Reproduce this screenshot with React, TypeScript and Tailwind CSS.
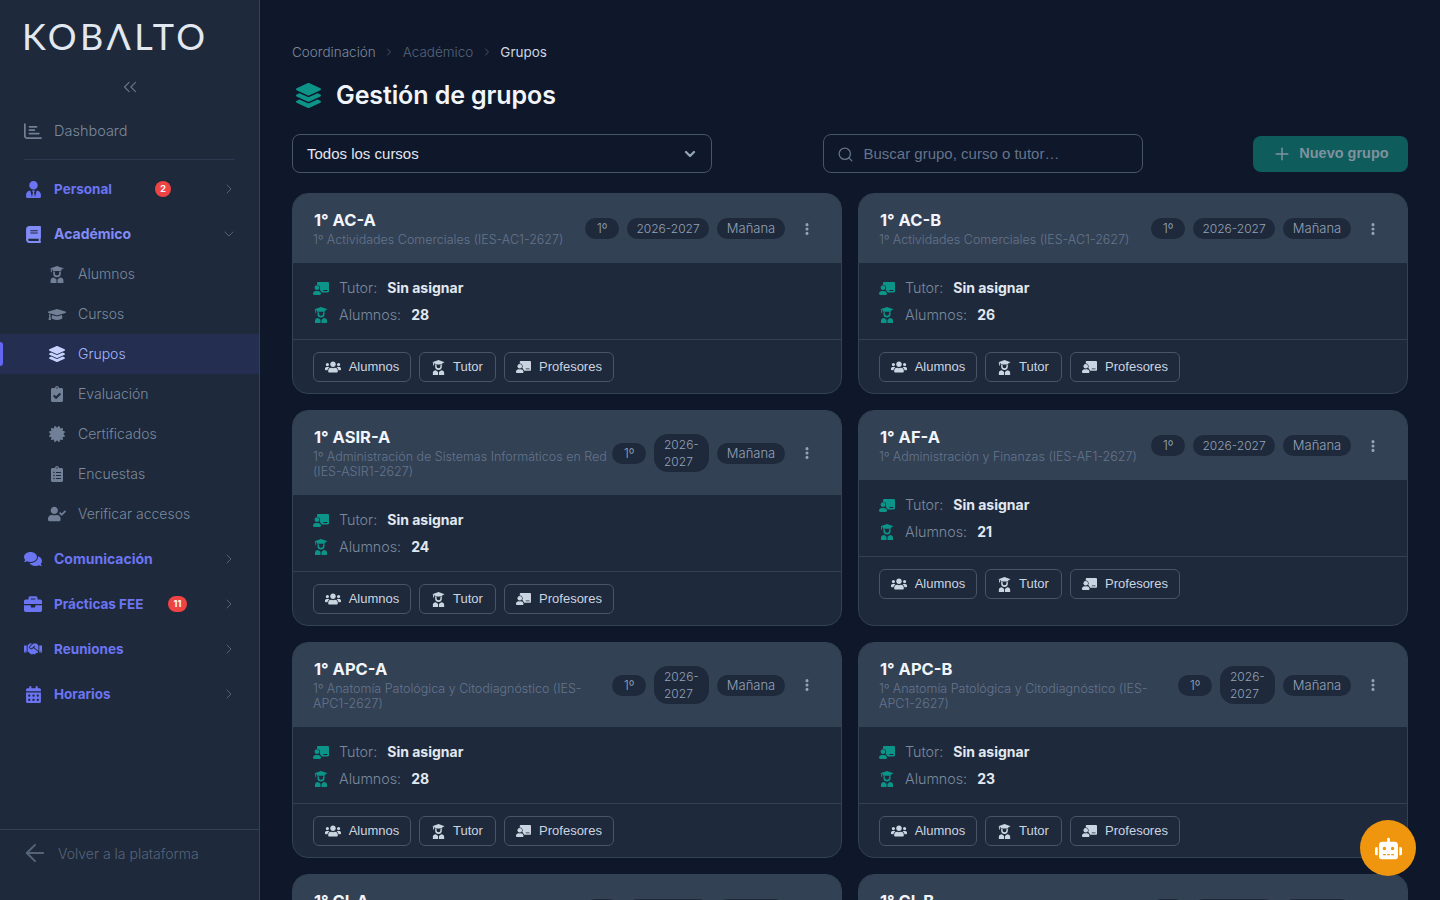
import React from 'react';
import { FaRegChartBar, FaCalendarDays, FaEllipsisVertical } from 'react-icons/fa6';
import {
  FaUserTie, FaBook, FaGraduationCap, FaLayerGroup, FaClipboardCheck, FaCertificate,
  FaClipboardList, FaUserCheck, FaComments, FaBriefcase, FaHandshake, FaUsers, FaRobot,
} from 'react-icons/fa';
import { ChevronsLeft, ChevronRight, ChevronDown, ArrowLeft, Search, Plus } from 'lucide-react';

// graduate with cap, the pack versions are too wide for what the design shows
const StudentIcon = ({ className }: { className?: string }) => (
  <svg viewBox="0 0 14 17" fill="currentColor" className={className}>
    <path d="M7 0L14 2.5L11.3 3.6V5H2.7V3.6L0 2.5Z" />
    <rect x="0.8" y="3" width="1" height="3.2" />
    <path d="M3.2 5.6V7.4a3.8 3.8 0 0 0 7.6 0V5.6H9.2V7.2a2.2 2.2 0 0 1-4.4 0V5.6Z" />
    <path d="M0.6 17V14.6C0.6 12.7 2 11.6 3.9 11.6L6.5 13.6V17Z" />
    <path d="M13.4 17V14.6C13.4 12.7 12 11.6 10.1 11.6L7.5 13.6V17Z" />
  </svg>
);

// teacher next to a filled board
const TeacherIcon = ({ className }: { className?: string }) => (
  <svg viewBox="0 0 640 512" fill="currentColor" className={className}>
    <circle cx="160" cy="224" r="96" />
    <path d="M208 352c-2.39 0-4.78.35-7.06 1.09C187.98 357.3 174.35 360 160 360c-14.35 0-27.98-2.7-40.95-6.91-2.28-.74-4.66-1.09-7.05-1.09C49.94 352-.33 402.48 0 464.62.14 490.88 21.73 512 48 512h224c26.27 0 47.86-21.12 48-47.38.33-62.14-49.94-112.62-112-112.62z" />
    <path fillRule="evenodd" d="M160 104V48C160 21 182 0 208 0H592C618 0 640 21 640 48V368C640 395 618 416 592 416H347C340 390 326 369 308 352L264 290A120 120 0 0 0 160 104ZM416 320V352H576V320Z" />
  </svg>
);

const subItems = [
  { name: 'Alumnos', icon: StudentIcon, size: 'w-[14px] h-[17px]' },
  { name: 'Cursos', icon: FaGraduationCap, size: 'text-[19px]' },
  { name: 'Grupos', icon: FaLayerGroup, size: 'text-[16px]', active: true },
  { name: 'Evaluación', icon: FaClipboardCheck, size: 'text-[16px]' },
  { name: 'Certificados', icon: FaCertificate, size: 'text-[16px]' },
  { name: 'Encuestas', icon: FaClipboardList, size: 'text-[16px]' },
  { name: 'Verificar accesos', icon: FaUserCheck, size: 'text-[18px]' },
];

const groups = [
  { title: '1° AC-A', sub: '1º Actividades Comerciales (IES-AC1-2627)', alumnos: 28 },
  { title: '1° AC-B', sub: '1º Actividades Comerciales (IES-AC1-2627)', alumnos: 26 },
  { title: '1° ASIR-A', sub: '1º Administración de Sistemas Informáticos en Red (IES-ASIR1-2627)', alumnos: 24, wrap: true },
  { title: '1° AF-A', sub: '1º Administración y Finanzas (IES-AF1-2627)', alumnos: 21 },
  { title: '1° APC-A', sub: '1º Anatomía Patológica y Citodiagnóstico (IES-APC1-2627)', alumnos: 28, wrap: true },
  { title: '1° APC-B', sub: '1º Anatomía Patológica y Citodiagnóstico (IES-APC1-2627)', alumnos: 23, wrap: true },
  { title: '1° CI-A', sub: '1º Cocina (IES-CI1-2627)', alumnos: 20 },
  { title: '1° CI-B', sub: '1º Cocina (IES-CI1-2627)', alumnos: 20 },
];

const NavGroup = ({ icon: Icon, label, badge, labelClass, iconSize, open, active }: any) => (
  <div className="flex items-center h-10 mt-[5px] pl-6 pr-[22px]">
    <span className="w-[18px] flex justify-center">
      <Icon className={`${iconSize ?? 'text-[17px]'} ${active ? 'text-[#818cf8]' : 'text-[#6b75f2]'}`} />
    </span>
    <span className={`ml-3 font-bold ${labelClass ?? 'text-[13.5px]'} ${active ? 'text-[#818cf8]' : 'text-[#6b75f2]'}`}>{label}</span>
    {badge && (
      <span className={`h-4 rounded-full bg-[#ef4444] text-white text-[9px] font-bold flex items-center justify-center ${badge.length > 1 ? 'w-[19px]' : 'w-4'}`}>
        {badge}
      </span>
    )}
    <span className="ml-auto text-[#56657c]">
      {open ? <ChevronDown className="w-4 h-4" strokeWidth={1.4} /> : <ChevronRight className="w-4 h-4" strokeWidth={1.4} />}
    </span>
  </div>
);

const Sidebar = () => (
  <aside className="w-[260px] h-screen shrink-0 bg-[#1e293b] border-r border-[#334155] flex flex-col">
    <div className="pl-[22px] pt-4 h-14 text-[36px] leading-10 font-['Lato',sans-serif] font-normal tracking-[3.4px] text-[#e2e8f0]">
      KOBΛLTO
    </div>
    <div className="mt-[19px] h-6 flex items-center justify-center text-[#64748b]">
      <ChevronsLeft className="w-[22px] h-[22px]" strokeWidth={1.3} />
    </div>
    <div className="mt-3 h-10 pl-6 flex items-center">
      <span className="w-[18px] flex justify-center text-[#718096]"><FaRegChartBar className="text-[18px]" /></span>
      <span className="ml-3 text-[14.5px] font-light text-[#7b899e]">Dashboard</span>
    </div>
    <div className="mt-2 mb-1 mx-6 border-t border-[#2b3950]" />
    <NavGroup icon={FaUserTie} label="Personal" badge="2" labelClass="text-[13.5px] w-[101px]" />
    <NavGroup icon={FaBook} label="Académico" labelClass="text-sm" open active />
    {subItems.map(item => {
      const Icon = item.icon;
      return (
        <div key={item.name} className={`relative h-10 pl-12 flex items-center ${item.active ? 'bg-[#232e50]' : ''}`}>
          {item.active && <span className="absolute left-0 top-2 w-[3px] h-6 rounded-r bg-[#6366f1]" />}
          <span className="w-[18px] flex justify-center">
            <Icon className={`${item.size} ${item.active ? 'text-[#c7d2fe]' : 'text-[#718096]'}`} />
          </span>
          <span className={`ml-3 text-sm font-light ${item.active ? 'text-[#a5b4fc]' : 'text-[#7b899e]'}`}>{item.name}</span>
        </div>
      );
    })}
    <NavGroup icon={FaComments} label="Comunicación" labelClass="text-sm" iconSize="text-[20px]" />
    <NavGroup icon={FaBriefcase} label="Prácticas FEE" badge="11" labelClass="text-[13.5px] w-[114px]" iconSize="text-[18px]" />
    <NavGroup icon={FaHandshake} label="Reuniones" iconSize="text-[20px]" />
    <NavGroup icon={FaCalendarDays} label="Horarios" />
    <div className="mt-auto h-[71px] border-t border-[#334155] pl-[21px] pt-[9px] flex items-start text-[#566479]">
      <ArrowLeft className="w-7 h-7" strokeWidth={1.7} />
      <span className="ml-[9px] mt-[5px] text-sm leading-5 font-light">Volver a la plataforma</span>
    </div>
  </aside>
);

const Chip = ({ children, extra }: { children: React.ReactNode; extra?: string }) => (
  <span className={`shrink-0 rounded-[14px] bg-[#1e293b] py-[2px] leading-[17px] font-light text-[#94a3b8] ${extra ?? ''}`}>
    {children}
  </span>
);

const ActionButton = ({ icon: Icon, label, width, iconSize }: any) => (
  <button className={`h-[30px] ${width} rounded-md border border-[#475569] flex items-center justify-center gap-2 text-[13px] text-[#cbd5e1] font-['Liberation_Sans',sans-serif]`}>
    <Icon className={iconSize} />
    {label}
  </button>
);

const GroupCard = ({ group }: { group: (typeof groups)[number] }) => (
  <div className="rounded-2xl border border-[#334155] bg-[#1e293b] overflow-hidden flex flex-col">
    <div className="bg-[#334155] pl-5 pr-5 py-4 flex items-center gap-2">
      <div className="flex-1 min-w-0 -mr-[6px]">
        <div className="pl-px mb-[2px] text-[16.5px] leading-5 font-bold text-[#f1f5f9]">{group.title}</div>
        <div className="text-[12.5px] leading-[15px] font-light text-[#64748b]">{group.sub}</div>
      </div>
      <Chip extra="w-[34px] text-[13px] text-center">1º</Chip>
      {group.wrap
        ? <Chip extra="w-[55px] pl-[10px] text-[12px]">2026-2027</Chip>
        : <Chip extra="w-[82px] text-[12px] text-center">2026-2027</Chip>}
      <Chip extra="w-[68px] text-[13px] text-center">Mañana</Chip>
      <button className="w-7 h-7 flex items-center justify-center text-[#94a3b8]">
        <FaEllipsisVertical className="text-sm" />
      </button>
    </div>
    <div className="px-5 pt-[14px] pb-[13px] flex flex-col gap-[5px]">
      <div className="h-[22px] flex items-center text-[14.3px]">
        <span className="w-4 flex justify-center"><TeacherIcon className="w-4 h-[13px] shrink-0 text-[#0d9488]" /></span>
        <span className="ml-[10px] font-light text-[#7b899e]">Tutor:</span>
        <span className="ml-[10px] text-sm font-bold text-[#e2e8f0]">Sin asignar</span>
      </div>
      <div className="h-[22px] flex items-center text-[14.3px]">
        <span className="w-4 flex justify-center"><StudentIcon className="w-[14px] h-4 text-[#0d9488]" /></span>
        <span className="ml-[10px] font-light text-[#7b899e]">Alumnos:</span>
        <span className="ml-[10px] text-sm font-bold text-[#e2e8f0]">{group.alumnos}</span>
      </div>
    </div>
    <div className="border-t border-[#334155] px-5 pt-3 pb-[11px] flex gap-2">
      <ActionButton icon={FaUsers} label="Alumnos" width="w-[98px]" iconSize="text-base" />
      <ActionButton icon={StudentIcon} label="Tutor" width="w-[77px]" iconSize="w-[13px] h-[15px]" />
      <ActionButton icon={TeacherIcon} label="Profesores" width="w-[110px]" iconSize="w-[15px] h-3" />
    </div>
  </div>
);

const App = () => (
  <div className="relative h-screen overflow-hidden flex bg-[#0f172a] font-['Inter',sans-serif]">
    <Sidebar />
    <main className="flex-1 min-w-0 px-8 pt-11 overflow-hidden">
      <nav className="h-4 flex items-center text-[13.5px] leading-4">
        <span className="font-light text-[#7b899e]">Coordinación</span>
        <ChevronRight className="w-3 h-3 mx-[7.5px] text-[#475569]" />
        <span className="font-light text-[#566479]">Académico</span>
        <ChevronRight className="w-3 h-3 mx-[7.5px] text-[#475569]" />
        <span className="text-[#cbd5e1]">Grupos</span>
      </nav>
      <div className="mt-[19px] h-8 flex items-center">
        <FaLayerGroup className="text-[25px] text-[#0d9488] ml-1" />
        <h1 className="ml-[15px] pt-[2px] text-[25px] tracking-[-0.1px] font-semibold text-[#f1f5f9]">Gestión de grupos</h1>
      </div>
      <div className="mt-[23px] flex items-center justify-between font-['Liberation_Sans',sans-serif]">
        <div className="w-[420px] h-[39px] pt-px rounded-lg border border-[#475569] px-[14px] flex items-center justify-between text-[15px] text-[#e2e8f0]">
          Todos los cursos
          <ChevronDown className="w-4 h-4 -mr-[1px] text-[#94a3b8]" strokeWidth={3.5} />
        </div>
        <div className="w-[320px] h-[39px] pt-px rounded-lg border border-[#475569] pl-[13px] flex items-center text-[15px] text-[#64748b]">
          <Search className="w-[17px] h-[17px]" strokeWidth={1.8} />
          <span className="ml-[10px]">Buscar grupo, curso o tutor…</span>
        </div>
        <button className="w-[155px] h-9 pt-px rounded-lg bg-[#0f5c5c] flex items-center justify-center text-[14.5px] font-bold text-[#7f929f]">
          <Plus className="w-5 h-5" strokeWidth={1.8} />
          <span className="ml-[7px]">Nuevo grupo</span>
        </button>
      </div>
      <div className="mt-5 grid grid-cols-2 gap-4">
        {groups.map(group => <GroupCard key={group.title} group={group} />)}
      </div>
    </main>
    <button className="absolute right-6 bottom-6 w-14 h-14 rounded-full bg-[#f0960e] flex items-center justify-center text-white">
      <FaRobot className="text-[27px]" />
    </button>
  </div>
);

export default App;
